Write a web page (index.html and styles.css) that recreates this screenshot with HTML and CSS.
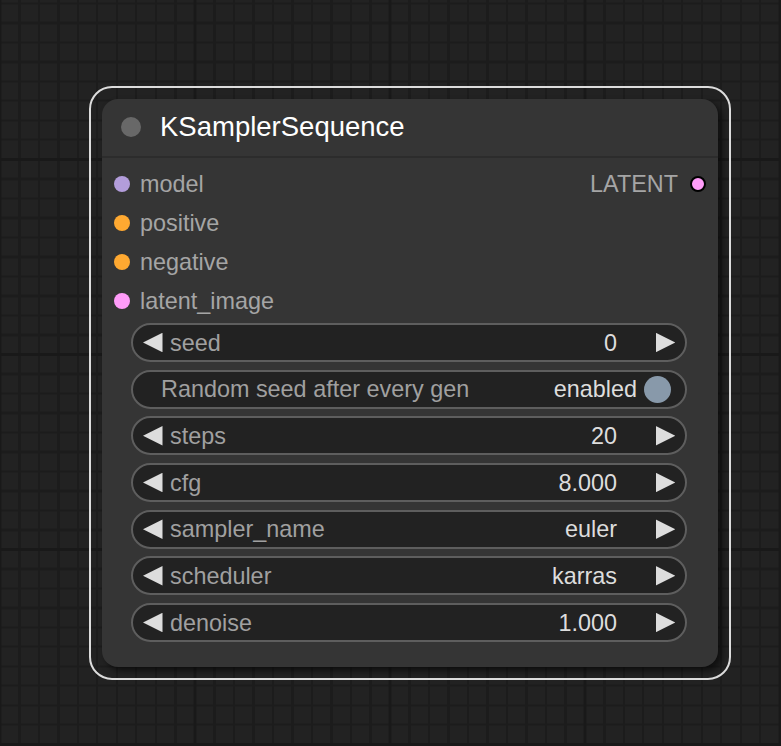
FILE: index.html
```html
<!DOCTYPE html>
<html>
<head>
<meta charset="utf-8">
<link rel="stylesheet" href="styles.css">
</head>
<body>
<div class="node-frame">
  <div class="node">
    <div class="title">
      <span class="title-dot"></span>
      <span class="title-text">KSamplerSequence</span>
    </div>
    <div class="slots">
      <div class="slot-row">
        <div class="slot"><span class="dot model"></span><span class="slot-label">model</span></div>
        <div class="slot out"><span class="slot-label">LATENT</span><span class="dot latent out-dot"></span></div>
      </div>
      <div class="slot-row">
        <div class="slot"><span class="dot cond"></span><span class="slot-label">positive</span></div>
      </div>
      <div class="slot-row">
        <div class="slot"><span class="dot cond"></span><span class="slot-label">negative</span></div>
      </div>
      <div class="slot-row">
        <div class="slot"><span class="dot latent"></span><span class="slot-label">latent_image</span></div>
      </div>
    </div>
    <div class="widgets">
      <div class="widget number"><span class="arrow left"></span><span class="label">seed</span><span class="value">0</span><span class="arrow right"></span></div>
      <div class="widget toggle"><span class="label">Random seed after every gen</span><span class="value">enabled</span><span class="knob"></span></div>
      <div class="widget number"><span class="arrow left"></span><span class="label">steps</span><span class="value">20</span><span class="arrow right"></span></div>
      <div class="widget number"><span class="arrow left"></span><span class="label">cfg</span><span class="value">8.000</span><span class="arrow right"></span></div>
      <div class="widget number"><span class="arrow left"></span><span class="label">sampler_name</span><span class="value">euler</span><span class="arrow right"></span></div>
      <div class="widget number"><span class="arrow left"></span><span class="label">scheduler</span><span class="value">karras</span><span class="arrow right"></span></div>
      <div class="widget number"><span class="arrow left"></span><span class="label">denoise</span><span class="value">1.000</span><span class="arrow right"></span></div>
    </div>
  </div>
</div>
</body>
</html>
```
FILE: styles.css
```css
html, body {
  margin: 0;
  padding: 0;
}
body {
  width: 781px;
  height: 746px;
  overflow: hidden;
  position: relative;
  font-family: "Liberation Sans", Arial, sans-serif;
  background-color: #222222;
  background-image:
    repeating-linear-gradient(to right, #191919 0 3px, transparent 3px 195px),
    repeating-linear-gradient(to bottom, #191919 0 3px, transparent 3px 195px),
    repeating-linear-gradient(to right, #1c1c1c 0 2px, transparent 2px 19.5px),
    repeating-linear-gradient(to bottom, #1c1c1c 0 2px, transparent 2px 19.5px);
  background-position: -1.5px 0, 0 158px, -1px 0, 0 2.5px;
}

.node-frame {
  position: absolute;
  left: 89px;
  top: 86px;
  padding: 11px;
  border: 2px solid #dcdcdc;
  border-radius: 23px;
}

.node {
  width: 616px;
  height: 568px;
  box-sizing: border-box;
  background: #353535;
  border-radius: 16px;
  box-shadow: 4px 4px 6px rgba(0, 0, 0, 0.55);
  display: flex;
  flex-direction: column;
}

.title {
  height: 59px;
  box-sizing: border-box;
  border-bottom: 2px solid #2c2c2c;
  display: flex;
  align-items: center;
  padding-left: 19px;
  padding-bottom: 1px;
  gap: 19px;
}
.title-dot {
  width: 20px;
  height: 20px;
  border-radius: 50%;
  background: #686868;
}
.title-text {
  color: #ffffff;
  font-size: 27.5px;
  line-height: 1;
}

.slots {
  padding-top: 6px;
  display: flex;
  flex-direction: column;
}
.slot-row {
  height: 39px;
  display: flex;
  align-items: center;
  justify-content: space-between;
}
.slot {
  display: flex;
  align-items: center;
  padding-left: 12px;
  gap: 10px;
}
.slot.out {
  padding-left: 0;
  padding-right: 12px;
  gap: 12px;
}
.slot-label {
  color: #a5a5a5;
  font-size: 23.4px;
  line-height: 1;
  margin-top: 2px;
}
.dot {
  width: 16px;
  height: 16px;
  border-radius: 50%;
  box-sizing: border-box;
}
.dot.model { background: #b39ddb; }
.dot.cond { background: #ffa931; }
.dot.latent { background: #ff9cf9; }
.dot.out-dot { border: 2px solid #000; }

.widgets {
  padding-top: 3px;
  padding-left: 29px;
  display: flex;
  flex-direction: column;
  gap: 7.67px;
}
.widget {
  width: 556px;
  height: 39px;
  box-sizing: border-box;
  border: 2px solid #5e5e5e;
  border-radius: 20px;
  background: #222222;
  display: flex;
  align-items: center;
  font-size: 23.4px;
  line-height: 1;
}
.widget .label {
  color: #a0a0a0;
  flex: 1;
  margin-top: 2px;
}
.widget .value {
  color: #dddddd;
  margin-top: 2px;
}
.widget.number {
  padding-left: 10px;
  padding-right: 9.7px;
}
.widget.number .label {
  margin-left: 7.5px;
}
.widget.number .value {
  margin-right: 38.8px;
}
.arrow {
  width: 19.5px;
  height: 19.5px;
  background: #dddddd;
}
.arrow.left {
  clip-path: polygon(100% 0, 0 50%, 100% 100%);
}
.arrow.right {
  clip-path: polygon(0 0, 100% 50%, 0 100%);
}
.widget.toggle {
  padding-left: 28px;
  padding-right: 14.5px;
}
.widget.toggle .value {
  margin-right: 6.5px;
}
.knob {
  width: 27px;
  height: 27px;
  border-radius: 50%;
  background: #8899aa;
}
```
